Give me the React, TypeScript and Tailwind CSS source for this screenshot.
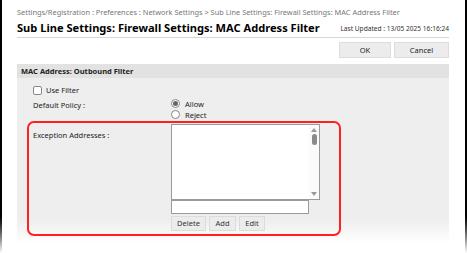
import React from 'react';

const btn =
  'h-[15px] bg-[#ececec] border border-[#dcdcdc] text-[7.5px] leading-[13px] text-[#333] text-center';

export default function App() {
  return (
    <div className="w-[467px] h-[253px] flex bg-white overflow-hidden font-['Noto_Sans',sans-serif] text-[#222]">
      <div className="w-[2px] shrink-0 bg-linear-to-b from-black from-[84%] to-white" />

      <div className="flex-1 min-w-0 overflow-hidden pl-[15px] pr-[16px] flex flex-col">
        {/* breadcrumb */}
        <div className="pt-[7px] h-[18px] text-[7.4px] leading-[10px] text-[#777] whitespace-nowrap">
          Settings/Registration : Preferences : Network Settings &gt; Sub Line Settings: Firewall Settings: MAC Address Filter
        </div>

        {/* title row */}
        <div className="flex items-end justify-between border-b border-[#d6d6d6] h-[20px] pb-[2px]">
          <span className="text-[11.1px] leading-[15px] font-bold text-black whitespace-nowrap">
            Sub Line Settings: Firewall Settings: MAC Address Filter
          </span>
          <span className="text-[6.6px] leading-[10px] text-[#333] whitespace-nowrap mb-[1px]">
            Last Updated : 13/05 2025 16:16:24
          </span>
        </div>

        {/* ok / cancel */}
        <div className="flex justify-end gap-[3px] mt-[4px]">
          <button className="w-[52px] h-[16px] bg-[#ececec] border border-[#dcdcdc] text-[7.5px] leading-[14px] text-[#222]">OK</button>
          <button className="w-[55px] h-[16px] bg-[#ececec] border border-[#dcdcdc] text-[7.5px] leading-[14px] text-[#222]">Cancel</button>
        </div>

        {/* section header */}
        <div className="mt-[6px] h-[14px] bg-[#e2e2e2] pl-[4px] text-[7.5px] leading-[14px] font-bold text-[#222]">
          MAC Address: Outbound Filter
        </div>

        {/* panel */}
        <div className="h-[165px] bg-linear-to-b from-[#eeeeee] from-[86%] to-white pl-[10px] pt-[7px] text-[7.5px] text-[#222]">
          <div className="flex items-center gap-[4px] pl-[6px] h-[10px]">
            <span className="w-[9px] h-[9px] rounded-[2px] border border-[#888] bg-white" />
            <span className="leading-[10px]">Use Filter</span>
          </div>

          <div className="flex pl-[6px] mt-[3px]">
            <div className="w-[138px] leading-[10px] pt-[2px]">Default Policy :</div>
            <div className="flex flex-col">
              <label className="flex items-center gap-[5px] h-[11px]">
                <span className="w-[9px] h-[9px] rounded-full border border-[#888] bg-white flex items-center justify-center">
                  <span className="w-[5px] h-[5px] rounded-full bg-[#666]" />
                </span>
                <span className="leading-[10px]">Allow</span>
              </label>
              <label className="flex items-center gap-[5px] h-[11px]">
                <span className="w-[9px] h-[9px] rounded-full border border-[#888] bg-white" />
                <span className="leading-[10px]">Reject</span>
              </label>
            </div>
          </div>

          {/* highlighted block */}
          <div className="mt-[1px] w-[314px] h-[115px] border-2 border-[#ff2020] rounded-[7px] flex pt-[1px]">
            <div className="w-[142px] pl-[4px] pt-[6px] leading-[10px]">Exception Addresses :</div>
            <div className="flex flex-col">
              <div className="w-[149px] h-[76px] border border-[#9a9a9a] bg-white flex justify-end">
                <div className="w-[10px] h-full bg-[#fafafa] flex flex-col items-center pt-[3px] pb-[3px]">
                  <svg width="6" height="4" viewBox="0 0 6 4"><path d="M0 4 L3 0 L6 4 Z" fill="#999" /></svg>
                  <span className="mt-[2px] w-[5px] h-[11px] rounded-full bg-[#8a8a8a]" />
                  <span className="flex-1" />
                  <svg width="6" height="4" viewBox="0 0 6 4"><path d="M0 0 L3 4 L6 0 Z" fill="#999" /></svg>
                </div>
              </div>
              <div className="w-[138px] h-[14px] border border-[#9a9a9a] bg-white" />
              <div className="flex gap-[3px] mt-[2px]">
                <button className={`${btn} w-[35px]`}>Delete</button>
                <button className={`${btn} w-[27px]`}>Add</button>
                <button className={`${btn} w-[26px]`}>Edit</button>
              </div>
            </div>
          </div>
        </div>
      </div>

      <div className="w-[2px] shrink-0 bg-linear-to-b from-black from-[84%] to-white" />
    </div>
  );
}
